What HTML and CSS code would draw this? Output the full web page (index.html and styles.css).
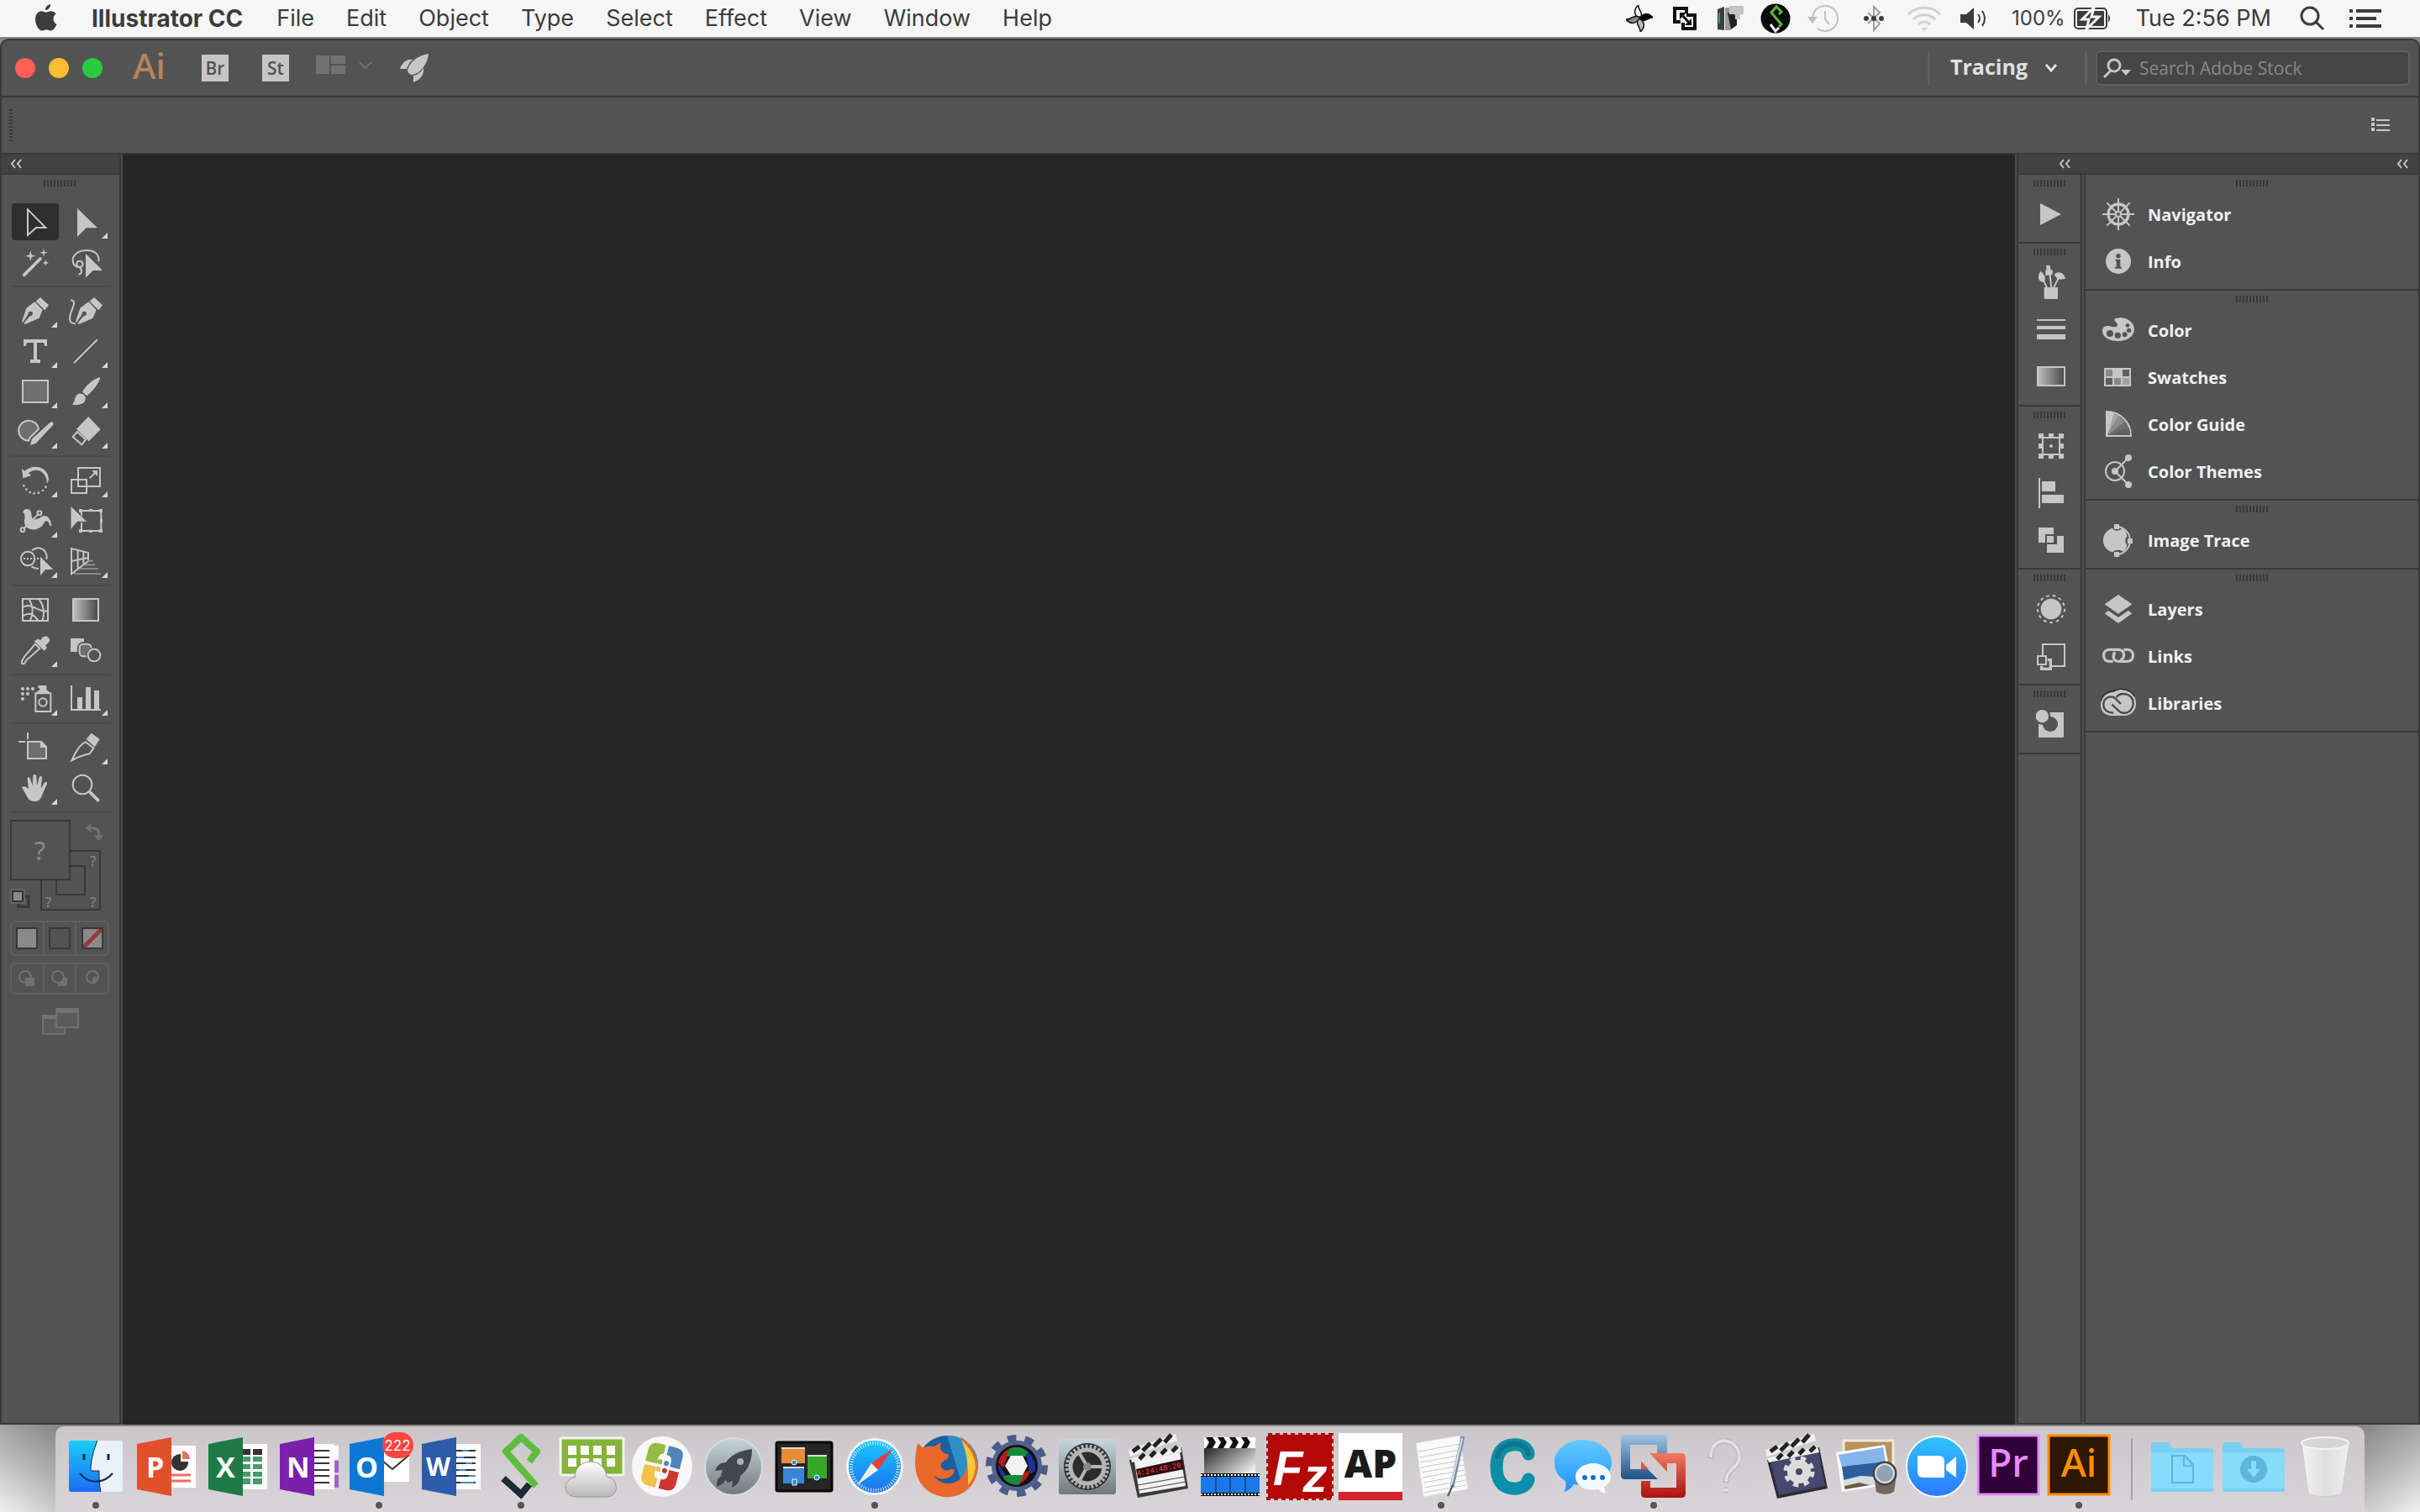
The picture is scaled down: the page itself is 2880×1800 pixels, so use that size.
FILE: index.html
```html
<!DOCTYPE html>
<html lang="en">

<head>
  <meta charset="UTF-8" />
  <meta name="viewport" content="width=device-width, initial-scale=1" />
  <title>Illustrator CC</title>
  <link rel="stylesheet" href="styles.css">
</head>

<body>

  <!-- Menu bar -->
  <header class="menubar">
    <nav class="menus" aria-label="Main menu">
      <button class="apple" aria-label="Apple">
        <svg width="26" height="34" viewBox="0 0 26 34"><path d="M18 0c.3 4-2.800 7.200-6 7C11.600 3.500 15 .300 18 0zM21.500 17.500c0-3.500 2-5 3.200-6C23 9 20.500 8.200 18.500 8.200c-2.500 0-4 1.400-5.500 1.400S9.500 8.200 7.500 8.200C3.500 8.200 0 12 0 18c0 7 4.500 13.500 8 13.500 2 0 3-1.300 5.200-1.300 2.300 0 3 1.300 5.300 1.300 3.300 0 6-5 7-7.700-2.500-1-4-3.500-4-6.300z" fill="#3c3c3c"/></svg>
      </button>
      <button class="app-name">Illustrator CC</button>
      <button>File</button>
      <button>Edit</button>
      <button>Object</button>
      <button>Type</button>
      <button>Select</button>
      <button>Effect</button>
      <button>View</button>
      <button>Window</button>
      <button>Help</button>
    </nav>

    <div class="status">
      <button class="narrow" aria-label="Fan control">
        <svg width="32" height="32" viewBox="0 0 32 32" stroke="#111" stroke-width="1.500"><path d="M16 16C9 12 9 5 15 0c-1 6 6 8 3 16z" fill="#f2f2f2"/><path d="M16 16c4-7 11-7 16-1-6-1-8 6-16 3z" fill="#000"/><path d="M16 16c7 4 7 11 1 16 1-6-6-8-3-16z" fill="#bbb"/><path d="M16 16c-4 7-11 7-16 1 6 1 8-6 16-3z" fill="#888"/></svg>
      </button>
      <button class="narrow" aria-label="VMware">
        <svg width="30" height="30" viewBox="0 0 30 30" fill="none" stroke="#111" stroke-width="4"><path d="M10 19H3V3h14v6"/><path d="M17 11h10v16H13v-7"/><path d="M11 10l10 11" stroke-width="3"/><path d="M9 8h8l-8 8zM23 23h-8l8-8z" fill="#111" stroke="none"/></svg>
      </button>
      <button class="narrow" aria-label="Server">
        <svg width="34" height="32" viewBox="0 0 34 32"><path d="M2 5l8-3v28l-8-1z" fill="#3b3f3e"/><path d="M11 3h7v27h-7z" fill="#999"/><path d="M14 9l11 3v12l-7 5z" fill="#222"/><path d="M16 1h17v10h-4v6h-6v-6h-7z" fill="#c4c4c4"/><path d="M4 9v13" stroke="#3c9a58" stroke-width="2"/></svg>
      </button>
      <button class="narrow" aria-label="Sync">
        <svg width="36" height="36" viewBox="0 0 36 36"><circle cx="18" cy="18" r="17.500" fill="#0a0a0a"/><path d="M22 13l3-3-6-6-6 7 12 14-3 3" fill="none" stroke="#5cb531" stroke-width="3"/><path d="M12 25l6 8 4-4" fill="none" stroke="#eee" stroke-width="3"/></svg>
      </button>
      <button aria-label="Time Machine">
        <svg width="38" height="34" viewBox="0 0 38 34" fill="none" stroke="#c2c2c2" stroke-width="2"><path d="M6 17a15 15 0 1 1 6 12"/><path d="M21 8v10l5 6"/><path d="M0 15h12l-6 8z" fill="#b9b9b9" stroke="none"/></svg>
      </button>
      <button aria-label="Bluetooth">
        <svg width="24" height="32" viewBox="0 0 24 32" fill="none" stroke="#9c9c9c" stroke-width="2"><path d="M5 9l14 13-7 8V2l7 7L5 22"/><g fill="#3c3c3c" stroke="none"><circle cx="3" cy="16" r="3"/><circle cx="12" cy="16" r="3"/><circle cx="21" cy="16" r="3"/></g></svg>
      </button>
      <button aria-label="Wi-Fi">
        <svg width="42" height="32" viewBox="0 0 42 32" fill="none" stroke="#d0d0d0" stroke-width="3"><path d="M2 11C12 .500 30 .500 40 11M8 17c7-7 19-7 26 0M14 23c4-4 10-4 14 0"/><path d="M17 27h8l-4 4z" fill="#d0d0d0" stroke="none"/></svg>
      </button>
      <button aria-label="Volume">
        <svg width="36" height="28" viewBox="0 0 36 28" fill="none" stroke="#3c3c3c" stroke-width="2"><path d="M1 9h7l9-8v26l-9-8H1z" fill="#3c3c3c" stroke="none"/><path d="M22 9q4 5 0 10M27 5q6 9 0 18"/></svg>
      </button>
      <button class="battery">
        <span>100%</span>
        <svg width="44" height="30" viewBox="0 0 44 30"><rect x="1" y="3" width="38" height="24" rx="4" fill="none" stroke="#3c3c3c" stroke-width="2"/><rect x="4" y="6" width="32" height="18" rx="1" fill="#3c3c3c"/><path d="M41 10q4 5 0 10z" fill="#3c3c3c"/><path d="M24 2L10 16h8l-3 12 15-15h-9z" fill="#3c3c3c" stroke="#f6f6f6" stroke-width="3"/></svg>
      </button>
      <button class="clock">Tue 2:56 PM</button>
      <button class="spotlight" aria-label="Spotlight">
        <svg width="30" height="30" viewBox="0 0 30 30" fill="none" stroke="#3c3c3c" stroke-width="3"><circle cx="12" cy="12" r="10"/><path d="M19 19l9 9"/></svg>
      </button>
      <button aria-label="Notification Center">
        <svg width="38" height="22" viewBox="0 0 38 22" fill="#3c3c3c"><path d="M0 0h4v4H0zM8 0h30v4H8zM0 9h4v4H0zM8 9h24v4H8zM0 18h4v4H0zM8 18h30v4H8z"/></svg>
      </button>
    </div>
  </header>

  <main class="window">
    <div class="titlebar">
      <div class="lights">
        <button class="light close" aria-label="Close"></button>
        <button class="light minimize" aria-label="Minimize"></button>
        <button class="light zoom" aria-label="Zoom"></button>
      </div>
      <span class="ai-logo">Ai</span>
      <button class="chip">Br</button>
      <button class="chip">St</button>
      <button class="arrange" aria-label="Arrange documents">
        <svg width="68" height="24" viewBox="0 0 68 24"><path d="M0 1h16v22H0zM18 1h17v10H18zM18 13h17v10H18z" fill="#717171"/><path d="M52 9l7 7 7-7" fill="none" stroke="#717171" stroke-width="2"/></svg>
      </button>
      <button aria-label="GPU performance">
        <svg width="34" height="34" viewBox="0 0 34 34" fill="#c6c6c6"><path d="M34 0C22 2 10 10 9 21c1 2 3 4 5 4C25 24 33 11 34 0zM0 18C3 10 8 6 15 7c-4 4-6 7-7 11zM16 34c8-3 13-9 12-17-3 5-7 8-12 9z"/></svg>
      </button>
      <button class="workspace-switch">
        <span>Tracing</span>
        <svg width="16" height="12" viewBox="0 0 16 12"><path d="M2 2l6 7 6-7" fill="none" stroke="#e0e0e0" stroke-width="3"/></svg>
      </button>
      <div class="search">
        <svg width="36" height="24" viewBox="0 0 36 24" fill="none" stroke="#c6c6c6" stroke-width="3"><circle cx="14" cy="9" r="7"/><path d="M10 15l-8 8"/><path d="M22 14h12l-6 7z" fill="#c6c6c6" stroke="none"/></svg>
        <input type="text" aria-label="Search Adobe Stock" placeholder="Search Adobe Stock" />
      </div>
    </div>

    <div class="controlbar">
      <span class="grip vertical"></span>
      <button aria-label="Panel menu">
        <svg width="22" height="16" viewBox="0 0 22 16" fill="#c6c6c6"><path d="M0 0h4v4H0zM0 6h4v4H0zM0 12h4v4H0zM6 2h16v2H6zM6 8h16v2H6zM6 14h16v2H6z"/></svg>
      </button>
    </div>

    <div class="workspace">
      <!-- Tools -->
      <aside class="toolbar">
        <div class="dock-head">
          <button class="collapse" aria-label="Collapse tools"><svg width="14" height="12" viewBox="0 0 14 12"><path d="M6 1L2 6l4 5M13 1L9 6l4 5"/></svg></button>
        </div>
        <span class="grip"></span>
        <div class="tools">
          <button class="active" aria-label="Selection"><svg viewBox="42 186 168 132"><path class="line" d="M99 208v92l30-27h34z"/></svg></button>
          <button class="fly" aria-label="Direct Selection"><svg viewBox="222 186 168 132"><path d="M276 204v102l32-32h40z"/></svg></button>
          <button aria-label="Magic Wand"><svg viewBox="42 330 168 132"><path class="line wide" d="M86 442l58-58"/><path d="M109 355l4 15 15 4-15 4-4 15-4-15-15-4 15-4zM156 347l3 12 12 3-12 3-3 12-3-12-12-3 12-3zM163 388l3 8 8 3-8 3-3 8-3-8-8-3 8-3z"/></svg></button>
          <button aria-label="Lasso"><svg viewBox="222 330 168 132"><path class="line" d="M352 394c4-22-12-40-42-40-28 0-50 14-50 36 0 20 18 28 30 22 10-6 6-20-6-20-10 0-14 14-6 20 14 4 20 26 2 28"/><path d="M306 366v86l26-26h34z"/></svg></button>
          <hr>
          <button class="fly" aria-label="Pen"><svg viewBox="42 504 168 132"><path d="M78 608l16-48 30-22 28 28-12 30-50 22-5-4 22-26a8 8 0 1 0-6-6l-20 30zM128 536l16-14 30 28-14 18z"/></svg></button>
          <button aria-label="Curvature"><svg viewBox="222 504 168 132"><path d="M270 608l16-48 30-22 28 28-12 30-50 22-5-4 22-26a8 8 0 1 0-6-6l-20 30zM320 536l16-14 30 28-14 18z"/><path class="line" d="M252 531c34 6-16 50 0 78 4 6 10 6 18 7"/></svg></button>
          <button class="fly" aria-label="Type"><svg viewBox="42 648 168 132"><path d="M84 672h84v24h-8l-4-12h-24v60h12v12h-36v-12h12v-60H96l-4 12h-8z"/></svg></button>
          <button class="fly" aria-label="Line Segment"><svg viewBox="222 648 168 132"><path class="line" d="M264 756l84-84"/></svg></button>
          <button class="fly" aria-label="Rectangle"><svg viewBox="42 792 168 132"><path class="line tinted" d="M81 819h90v78H81z"/></svg></button>
          <button class="fly" aria-label="Paintbrush"><svg viewBox="222 792 168 132"><path d="M256 904c14-6 8-34 26-38 18-2 30 14 20 28-8 12-30 14-46 10zM294 860c12-22 36-44 60-52 4 0 4 4 2 8-8 18-24 40-46 58z"/></svg></button>
          <button class="fly" aria-label="Shaper"><svg viewBox="42 936 168 132"><path class="line tinted" d="M102 1034a36 36 0 1 1 36-42l-32 32z"/><path d="M106 1052l6-24 66-60 6-3c8 2 10 10 6 14l-62 66z" stroke="#535353" stroke-width="3"/></svg></button>
          <button class="fly" aria-label="Eraser"><svg viewBox="222 936 168 132"><path d="M316 948l43 46-42 42-44-44z"/><path class="line" d="M276 1002l30 28-14 18-32-28z"/></svg></button>
          <hr>
          <button class="fly" aria-label="Rotate"><svg viewBox="42 30 168 132"><path d="M78 54l10 8c34-28 84-14 86 30l-6 16c0-44-38-62-66-38l10 8-30 10z"/><g><circle cx="85" cy="115" r="4"/><circle cx="94" cy="128" r="4"/><circle cx="107" cy="138" r="4"/><circle cx="122" cy="142" r="4"/><circle cx="138" cy="140" r="4"/><circle cx="153" cy="132" r="4"/><circle cx="163" cy="119" r="4"/></g></svg></button>
          <button class="fly" aria-label="Scale"><svg viewBox="222 30 168 132"><path class="line" d="M279 51h78v66h-78zM255 93h54v48h-54zM320 88l22-22"/><path d="M328 60h20v22z"/></svg></button>
          <button class="fly" aria-label="Width"><svg viewBox="42 174 168 132"><path d="M82 214c-2-20 28-22 30 0 0 8 2 18 8 22l22-6c10-14 38-14 42 28h-6c-4-20-16-22-22-8-10 22-40 26-56 16-14-8-14-24-12-34 2-14-2-26-6-18z"/><path class="line" d="M86 267l49-49"/><circle cx="108" cy="246" r="11" class="line"/><circle cx="81" cy="272" r="7" class="line knob"/><circle cx="141" cy="212" r="7" class="line knob"/></svg></button>
          <button aria-label="Free Transform"><svg viewBox="222 174 168 132"><path class="line" d="M291 204h70v72h-70zM291 204v12M291 250v26"/><path d="M282 198h12v12h-12zM318 198h12v10h-12zM354 198h12v12h-12zM358 234h8v12h-8zM354 270h12v12h-12zM318 272h12v10h-12zM282 270h12v12h-12z"/><path d="M252 186v86l24-28h36z" stroke="#535353" stroke-width="3"/></svg></button>
          <button class="fly" aria-label="Shape Builder"><svg viewBox="42 318 168 132"><g class="line"><path d="M116 356a25 25 0 1 0 0 38c10-10 10-28 0-38z"/><path d="M114 346c24-20 58-4 52 32M112 403c8 6 16 8 26 8"/><path d="M84 375h60" stroke-dasharray="6 6"/></g><path d="M144 368v68l18-22h28z"/></svg></button>
          <button class="fly" aria-label="Perspective Grid"><svg viewBox="222 318 168 132"><path class="line" d="M255 339v91l60-46v-30zM255 384l60-12M278 346v66M298 350v46"/><path stroke="#999" stroke-width="5" d="M312 383h20M300 397h40M284 411h66M264 429h96"/></svg></button>
          <hr>
          <button aria-label="Mesh"><svg viewBox="42 492 168 132"><path class="line" d="M81 519h90v78H81zM104 520c14 24 16 50 4 76M140 520c18 26 20 50 12 76M82 548c36-18 46 20 88 14M82 580c20-14 36-10 54 16" /></svg></button>
          <button aria-label="Gradient"><svg viewBox="222 492 168 132"><path class="line faded" d="M261 519h90v78h-90z"/></svg></button>
          <button class="fly" aria-label="Eyedropper"><svg viewBox="42 636 168 132"><path class="line" d="M126 680l16 16-46 40-10 14c-8 4-12-6-6-12l8-14z"/><path d="M122 670l12-8 12 4c6-16 20-16 28-8 6 10 2 18-12 26l6 10-10 10z"/></svg></button>
          <button aria-label="Blend"><svg viewBox="222 636 168 132"><path d="M252 660h48v48h-48z"/><rect x="282" y="678" width="44" height="48" rx="16" fill="#8a8a8a" stroke="#535353" stroke-width="12"/><rect x="284" y="680" width="42" height="44" rx="14" class="line tinted"/><circle cx="336" cy="720" r="28" fill="#535353"/><circle cx="336" cy="720" r="22" class="line"/></svg></button>
          <hr>
          <button class="fly" aria-label="Symbol Sprayer"><svg viewBox="42 810 168 132"><path class="line" d="M127 856h54v65h-54z"/><path d="M140 828h26v16l16 12h-56l16-12v-6h-6v-8z"/><circle cx="153" cy="888" r="14" class="line"/><circle cx="81" cy="840" r="6"/><circle cx="99" cy="840" r="6"/><circle cx="117" cy="840" r="6"/><circle cx="81" cy="858" r="6"/><circle cx="99" cy="858" r="6"/><circle cx="81" cy="876" r="6"/></svg></button>
          <button class="fly" aria-label="Column Graph"><svg viewBox="222 810 168 132"><path class="line" d="M255 828v87h105"/><path d="M276 870h18v46h-18zM306 834h18v82h-18zM336 846h18v70h-18z"/></svg></button>
          <hr>
          <button aria-label="Artboard"><svg viewBox="42 984 168 132"><path class="line" d="M99 996v24M66 1029h24"/><path class="line tinted" d="M99 1029h48l18 18v42H99z"/><path d="M144 1028v22h22z"/></svg></button>
          <button class="fly" aria-label="Slice"><svg viewBox="222 984 168 132"><path class="line" d="M256 1096c14-32 28-58 50-66l28 22-14 20c-18 4-40 10-64 24z"/><path d="M308 1020l18-22 30 22-18 28z"/></svg></button>
          <button class="fly" aria-label="Hand"><svg viewBox="42 1128 168 132"><path d="M78 1192c6-6 14-4 24 6l-4-36c0-8 8-8 10 0l8 24 2-34c0-8 12-8 12 0l2 34 8-30c4-8 12-4 10 4l-4 36 12-20c4-6 12-4 10 4l-18 40c-4 14-12 22-24 22s-22-2-28-14z"/></svg></button>
          <button aria-label="Zoom"><svg viewBox="222 1128 168 132"><circle cx="294" cy="1182" r="34" class="line"/><path class="line wide" d="M322 1210l28 28"/></svg></button>
          <hr>
        </div>

        <svg class="fill-stroke" viewBox="36 156 360 348" role="img" aria-label="Fill and stroke">
          <g fill="#535353" stroke="#383838" stroke-width="6">
            <path d="M147 279h210v210H147z"/><path d="M201 333h102v102H201z"/><path d="M39 171h210v210H39z"/>
            <path d="M66 442h36v36H66z" stroke-width="10"/>
          </g>
          <path d="M45 423h36v36H45z" fill="none" stroke="#6a6a6a" stroke-width="16"/>
          <path d="M45 423h36v36H45z" fill="#8a8a8a" stroke="#333" stroke-width="6"/>
          <path d="M304 197l22-17v12c22 0 32 8 32 30h12l-18 22-16-22h12c0-14-6-20-22-20v12z" fill="#717171"/>
          <g fill="#8a8a8a">
            <text x="122" y="311" font-size="92">?</text>
            <text x="321" y="333" font-size="50">?</text>
            <text x="162" y="480" font-size="50">?</text>
            <text x="321" y="480" font-size="50">?</text>
          </g>
        </svg>

        <div class="segmented">
          <button aria-label="Color"><i class="swatch solid"></i></button>
          <button aria-label="Gradient fill"><i class="swatch"></i></button>
          <button aria-label="None"><i class="swatch none"></i></button>
        </div>
        <div class="segmented modes">
          <button aria-label="Draw Normal"><svg width="22" height="22" viewBox="0 0 22 22"><circle cx="9" cy="9" r="7"/><path d="M9 10h11v10H9z"/></svg></button>
          <button aria-label="Draw Behind"><svg width="22" height="22" viewBox="0 0 22 22"><path d="M9 10h11v10H9z"/><circle class="front" cx="9" cy="9" r="7"/></svg></button>
          <button aria-label="Draw Inside"><svg width="22" height="22" viewBox="0 0 22 22"><circle cx="11" cy="9" r="7"/><path d="M11 9h7q0 7-7 7z"/></svg></button>
        </div>
        <button class="screen-mode" aria-label="Screen mode"><svg width="44" height="32" viewBox="0 0 44 32"><path d="M1 11h26v20H1z"/><path d="M0 8h28v5H0z" fill="#717171" stroke="none"/><path d="M17 1h26v22H17z"/><path d="M16 0h28v6H16z" fill="#717171" stroke="none"/></svg></button>
      </aside>

      <section class="canvas" aria-label="Canvas"></section>

      <!-- Panels -->
      <aside class="panels">
        <div class="dock-head">
          <button class="collapse" aria-label="Expand icon panels"><svg width="14" height="12" viewBox="0 0 14 12"><path d="M6 1L2 6l4 5M13 1L9 6l4 5"/></svg></button>
          <button class="collapse" aria-label="Expand panels"><svg width="14" height="12" viewBox="0 0 14 12"><path d="M6 1L2 6l4 5M13 1L9 6l4 5"/></svg></button>
        </div>
        <div class="panel-columns">
          <div class="column icons-only">
            <div class="group">
              <span class="grip"></span>
              <button aria-label="Actions"><svg viewBox="66 141 222 168"><path d="M144 186l75 39-75 39z"/></svg></button>
            </div>
            <div class="group">
              <span class="grip"></span>
              <button aria-label="Brushes"><svg viewBox="66 387 222 168"><path d="M158 486h49v38q0 4-4 4h-41q-4 0-4-4z"/><path class="line" d="M154 458l14 30M178 436l6 52M210 452l-18 36"/><path d="M146 428c-14 16-10 36 8 40 12-8 10-24-8-40zM165 408h14l2 14 8 4-2 16-24 2v-18l4-4zM194 442c8-16 36-12 40 14l-26 2z"/></svg></button>
              <button aria-label="Stroke"><svg viewBox="66 555 222 168"><path d="M132 600h102v6H132zM132 624h102v12H132zM132 654h102v18H132z"/></svg></button>
              <button aria-label="Gradient panel"><svg viewBox="66 723 222 168"><path class="line faded" d="M135 771h96v66h-96z"/></svg></button>
            </div>
            <div class="group">
              <span class="grip"></span>
              <button aria-label="Transform"><svg viewBox="66 969 222 168"><path class="line" d="M153 1023h60v60h-60z"/><path d="M138 1008h18v18h-18zM174 1008h18v12h-18zM210 1008h18v18h-18zM138 1044h12v18h-12zM216 1044h12v18h-12zM138 1080h18v18h-18zM174 1086h18v12h-18zM210 1080h18v18h-18z"/><circle cx="183" cy="1053" r="6"/></svg></button>
              <button aria-label="Align"><svg viewBox="66 -3 222 168"><path d="M138 27h6v108h-6zM150 39h48v36h-48zM150 87h78v30h-78z"/></svg></button>
              <button aria-label="Pathfinder"><svg viewBox="66 165 222 168"><path d="M138 204h54v24h-30v30h-24zM204 234h24v60h-60v-30h36zM168 234h24v24h-24z"/></svg></button>
            </div>
            <div class="group">
              <span class="grip"></span>
              <button aria-label="Appearance"><svg viewBox="66 411 222 168"><circle cx="183" cy="495" r="37"/><circle cx="183" cy="495" r="48" class="line" stroke-dasharray="11 12"/></svg></button>
              <button aria-label="Graphic Styles"><svg viewBox="66 579 222 168"><path class="line" d="M153 660v-39h78v78h-45M135 663h30v30h-30z"/><path class="line thick" d="M149 698v11h32v-32h-11"/></svg></button>
            </div>
            <div class="group">
              <span class="grip"></span>
              <button aria-label="Symbols"><svg viewBox="66 825 222 168"><path d="M138 864h90v90h-90z"/><circle cx="180" cy="906" r="27" fill="#535353"/><circle cx="151" cy="878" r="30" fill="#535353"/><circle cx="151" cy="878" r="23"/></svg></button>
            </div>
          </div>

          <div class="column">
            <div class="group">
              <span class="grip"></span>
              <button><svg viewBox="306 141 222 168"><circle cx="423" cy="225" r="36" class="line thick"/><circle cx="423" cy="225" r="9" class="line"/><path class="line" d="M423 168v46M423 236v46M366 225h46M434 225h46M382 184l33 33M431 233l33 33M464 184l-33 33M415 233l-33 33"/></svg>Navigator</button>
              <button><svg viewBox="306 309 222 168"><circle cx="423" cy="393" r="45"/><path fill="#535353" d="M412 386h18v27h5v6h-24v-6h5v-21h-4z"/><circle cx="423" cy="374" r="8" fill="#535353"/></svg>Info</button>
            </div>
            <div class="group">
              <span class="grip"></span>
              <button><svg viewBox="306 555 222 168"><path d="M410 598c34-12 70 8 70 38 0 24-24 42-58 42-32 0-56-14-56-36 0-14 10-20 24-18 14 4 28 8 30-4 0-8-14-12-10-22z"/><g fill="#535353"><circle cx="393" cy="651" r="12"/><circle cx="421" cy="658" r="11"/><circle cx="446" cy="655" r="9"/><circle cx="461" cy="640" r="8"/><circle cx="456" cy="622" r="7"/></g></svg>Color</button>
              <button><svg viewBox="306 723 222 168"><path d="M372 774h96v66h-96z"/><path fill="#8a8a8a" d="M378 780h24v24h-24zM408 810h24v24h-24z"/><path fill="#606060" d="M438 780h24v24h-24zM378 810h24v24h-24z"/><path fill="#a0a0a0" d="M438 810h24v24h-24z"/></svg>Swatches</button>
              <button><svg viewBox="306 891 222 168"><path class="line tinted" d="M381 930c50 0 87 38 87 87h-87z"/><path fill="#a4a4a4" d="M384 1014l8-80 32 10z"/><path fill="#8c8c8c" d="M384 1014l40-70 22 22z"/><path fill="#606060" d="M384 1014l78-26 4 26z"/><path d="M384 1014v-84l24 3z"/></svg>Color Guide</button>
              <button><svg viewBox="306 1059 222 168"><circle cx="411" cy="1143" r="33" class="line"/><circle cx="411" cy="1143" r="12"/><path class="line" d="M411 1143l48-48M411 1143l48 48"/><circle cx="459" cy="1095" r="12"/><circle cx="459" cy="1191" r="12"/></svg>Color Themes</button>
            </div>
            <div class="group">
              <span class="grip"></span>
              <button><svg viewBox="306 165 222 168"><path d="M402 206c4 12 26 12 34 2 14 8 16 16 18 28-8 6-8 22 0 30-2 12-6 18-14 24-10-8-28-8-38 2-44-14-44-72 0-86z"/><path class="line" d="M422 201a50 50 0 0 1 0 99"/><path d="M408 192h18v18h-18zM408 291h18v18h-18zM456 243h18v18h-18z"/></svg>Image Trace</button>
            </div>
            <div class="group">
              <span class="grip"></span>
              <button><svg viewBox="306 411 222 168"><path d="M423 444l49 34-49 34-49-34zM374 511l14-10 35 24 35-24 14 10-49 35z"/></svg>Layers</button>
              <button><svg viewBox="306 579 222 168"><g class="line thick"><path d="M404 682h-14c-26 0-26-42 0-42h32c26 0 26 32 8 38"/><path d="M442 640h14c26 0 26 42 0 42h-32c-22 0-22-24-12-32"/></g></svg>Links</button>
              <button><svg viewBox="306 747 222 168"><path d="M360 838c0-28 22-46 48-46 22-20 78-6 78 40 0 26-16 44-42 44h-44c-24 0-40-14-40-38z"/><path fill="none" stroke="#4a4a4a" stroke-width="7" d="M432 834l-20-20c-14-12-42-4-42 22 0 20 16 30 36 30M400 836l28 26c30 14 48-10 48-30 0-34-42-44-60-22"/><path d="M362 822c4-24 24-32 44-34 22-14 60-6 74 18" fill="none" stroke="#2b2b2b" stroke-width="4"/></svg>Libraries</button>
            </div>
          </div>
        </div>
      </aside>
    </div>
  </main>

  <!-- Dock -->
  <footer class="dock">
    <div class="apps">
      <button class="running" aria-label="Finder"><svg viewBox="0 0 84 102"><rect x="10" y="17" width="64" height="61" rx="3" fill="#e9f1fa"/><path d="M13 17h31c-5 12-8 24-8 36h10c0 9 0 17 2 25H13q-3 0-3-3V20q0-3 3-3z" fill="url(#finder)"/><g fill="none" stroke="#16283c" stroke-width="2"><path d="M44 17c-5 12-8 24-8 36h10c0 9 0 17 2 25" stroke-width="1"/><path d="M28 33v7M57 33v7" stroke-width="3"/><path d="M23 56c10 13 28 13 39 0"/></g></svg></button>
      <button aria-label="PowerPoint"><svg viewBox="0 0 84 102"><path d="M46 23h31v50H46z" fill="#fff"/><path d="M59 33v9h9a10 10 0 1 1-9-9z" fill="#333"/><path d="M61 29a10 10 0 0 1 9 10h-9z" fill="#e8715a"/><path d="M48 58h23M48 65h23" stroke="#e8715a" stroke-width="3"/><path d="M7 21l41-8v70L7 75z" fill="#e1502b"/><text x="18" y="61" class="office">P</text></svg></button>
      <button aria-label="Excel"><svg viewBox="0 0 84 102"><path d="M46 21h31v54H46z" fill="#fff"/><path d="M46 27h11v7H46zM60 27h11v7H60z" fill="#333"/><path d="M46 36h11v6H46zM60 36h11v6H60zM46 45h11v6H46zM60 45h11v6H60zM46 54h11v6H46zM60 54h11v6H60zM46 62h11v7H46zM60 62h11v7H60z" fill="#4a9a6c"/><path d="M7 21l41-8v70L7 75z" fill="#1f7a46"/><text x="16" y="61" class="office">X</text></svg></button>
      <button aria-label="OneNote"><svg viewBox="0 0 84 102"><path d="M46 21h27v54H46zM73 23h5v16h-5z" fill="#fff"/><path d="M73 41h5v14h-5zM73 58h5v15h-5z" fill="#a264c8"/><path d="M48 29h19M48 37h19M48 44h19M48 52h19M48 59h19M48 67h19" stroke="#333" stroke-width="2"/><path d="M8 21l41-8v70L8 75z" fill="#7a20ab"/><text x="16" y="61" class="office">N</text></svg></button>
      <button class="running" aria-label="Outlook, 222 unread"><svg viewBox="0 0 84 102"><path d="M46 21h32v45H46z" fill="#fff"/><path d="M46 41l12 10 20-17" fill="none" stroke="#333" stroke-width="2"/><path d="M7 21l41-8v70L7 75z" fill="#0c78d4"/><text x="14" y="61" class="office">O</text><rect x="46" y="7" width="37" height="31" rx="15" fill="#fc4540"/><text x="64" y="29" text-anchor="middle" class="badge">222</text></svg></button>
      <button aria-label="Word"><svg viewBox="0 0 84 102"><path d="M46 21h32v54H46z" fill="#fff"/><path d="M48 29h24M48 37h24M48 44h24M48 52h24M48 59h24M48 67h24" stroke="#333" stroke-width="2"/><path d="M56 29h8M50 37h8M60 44h8M52 52h8M64 59h8M54 67h16" stroke="#4a86cf" stroke-width="2"/><path d="M8 21l41-8v70L8 75z" fill="#2b5ba9"/><text x="13" y="59" class="office small">W</text></svg></button>
      <button class="running" aria-label="Slickedit"><svg viewBox="0 0 84 102" fill="none" stroke-width="8"><path d="M52 42l9-12-19-17-18 17 36 41" stroke="#5ebd3e" stroke-linejoin="round"/><path d="M21 62l21 19 10-12" stroke="#1c2b36"/></svg></button>
      <button aria-label="Cloud desktop"><svg viewBox="0 0 84 102"><rect x="5" y="14" width="75" height="44" rx="2" fill="#85b43a" stroke="#f2f6ea" stroke-width="3"/><path d="M14 23h10v11H14zM29 23h10v11H29zM44 23h10v11H44zM60 23h10v11H60zM14 38h10v10H14zM29 38h10v10H29zM44 38h10v10H44zM60 38h10v10H60z" fill="#fafafa"/><path d="M24 84c-18 0-16-22-2-23 0-25 36-25 38-1 14 1 16 24 0 24z" fill="url(#silver)" stroke="#999"/></svg></button>
      <button aria-label="Windows share"><svg viewBox="0 0 84 102"><circle cx="42" cy="48" r="36" fill="#f7f7f7"/><g transform="rotate(14 42 48)"><path d="M21 32q0-10 10-10h9v11q-5 0-5 7v6H21z" fill="#95bd41"/><path d="M44 22h9q10 0 10 10v14H51v-6q0-7-7-7z" fill="#4f85b8"/><path d="M21 50h14v6q0 7 5 7v11h-9q-10 0-10-10z" fill="#f2c24c"/><path d="M51 50h12v14q0 10-10 10h-9V63q7 0 7-7z" fill="#ce3530"/><circle cx="38" cy="43" r="3" fill="#95bd41"/><circle cx="46" cy="43" r="3" fill="#4f85b8"/><circle cx="38" cy="52" r="3" fill="#f2c24c"/><circle cx="46" cy="52" r="3" fill="#ce3530"/></g></svg></button>
      <button aria-label="Launchpad"><svg viewBox="0 0 84 102"><circle cx="42" cy="48" r="34" fill="url(#steel)" stroke="#d3dde2" stroke-width="2"/><path d="M64 27c-16 2-26 8-31 16-7 0-11 4-13 10l9-1-2 6 8 9 6-2-1 8c6-3 10-8 10-14 9-6 14-18 14-32zM28 59c-6 2-6 8-6 13 4-2 9-3 10-9z" fill="#42474b"/><circle cx="50" cy="42" r="4" fill="#aab4b9"/></svg></button>
      <button aria-label="Mission Control"><svg viewBox="0 0 84 102"><rect x="9" y="19" width="66" height="58" rx="2" fill="#262626" stroke="#080808" stroke-width="3"/><path d="M15 26h28v18H15z" fill="#e88b35"/><path d="M46 35h23v27H46z" fill="#35a82b"/><path d="M17 49h25v19H17z" fill="#3a84d8"/><path d="M15 26h28M46 35h23M17 49h25" stroke="#ddd" stroke-width="2"/><g fill="#1d90e6" stroke="#fff"><circle cx="30" cy="43" r="3"/><circle cx="57" cy="61" r="3"/><path d="M28 63h5v7h-5z"/></g></svg></button>
      <button class="running" aria-label="Safari"><svg viewBox="0 0 84 102"><circle cx="42" cy="48" r="34" fill="#f4f4f4"/><circle cx="42" cy="48" r="31" fill="url(#ocean)"/><circle cx="42" cy="48" r="28" fill="none" stroke="#d9f1ff" stroke-width="4" stroke-dasharray="1 2"/><path d="M63 27L38 44l8 8z" fill="#ee3b35"/><path d="M21 70l17-26 8 8z" fill="#f0f0f0"/></svg></button>
      <button aria-label="Firefox"><svg viewBox="0 0 84 102"><circle cx="43" cy="46" r="35" fill="#1c5f9e"/><path d="M43 11a35 35 0 0 1 20 65z" fill="#2d8fc6"/><path d="M8 20l7 6c4-3 9-3 13-2l8-5c-2 5-1 8 1 11 4 4 9 2 8 5 0 4-7 6-9 9-2 6 6 11 12 7 3-1 6 3 1 7-6 6-16 6-22 0 8 14 30 14 38-4 6-14 0-34-6-42C78 26 84 46 76 64 62 92 22 90 9 63 3 50 5 34 8 20z" fill="#e9682a"/><path d="M60 16c16 14 24 36 8 54 0-20 0-36-8-54z" fill="#fbc73a"/></svg></button>
      <button aria-label="Aperture tool"><svg viewBox="0 0 84 102"><circle cx="42" cy="47" r="32" fill="none" stroke="#4b5a8a" stroke-width="10" stroke-dasharray="10 10"/><circle cx="42" cy="47" r="30" fill="#50608f"/><circle cx="42" cy="47" r="25" fill="#111"/><path d="M34 26l-8 24-6-7q3-12 14-17z" fill="#b41c20"/><path d="M34 26q12-4 21 4l4 6H30z" fill="#168a3b"/><path d="M56 31q10 10 8 22l-6 4-5-24z" fill="#1c2fa0"/><path d="M58 52q-2 12-15 18l6-14z" fill="#b41c20"/><path d="M24 58h26l-6 12q-14 0-20-12z" fill="#168a3b"/><path d="M20 45l10 14h-6q-5-7-4-14z" fill="#1c2fa0"/><path d="M35 35h14l6 12-6 11H35l-7-11z" fill="#f2f2f2"/></svg></button>
      <button aria-label="System Preferences"><svg viewBox="0 0 84 102"><rect x="8" y="15" width="68" height="66" rx="3" fill="url(#steel)"/><circle cx="42" cy="48" r="28" fill="#2c2c2c"/><circle cx="42" cy="48" r="24" fill="none" stroke="#aaa" stroke-width="5" stroke-dasharray="3 2"/><circle cx="42" cy="48" r="20" fill="none" stroke="#b5b5b5" stroke-width="5"/><path d="M42 48h20M42 48L32 31M42 48L32 66" stroke="#b5b5b5" stroke-width="4"/><circle cx="42" cy="48" r="5" fill="#888"/></svg></button>
      <button aria-label="Clapper"><svg viewBox="0 0 84 102"><path d="M8 40l62-15 8 49-60 11z" fill="#3a3a3a"/><path d="M14 42l54-11 7 40-55 9z" fill="#f2f2f2"/><path d="M7 28l56-19 2 8L9 36z" fill="#eee"/><path d="M10 38l59-14 1 7-59 12z" fill="#eee"/><path d="M12 30l8-6M24 29l9-9M37 24l9-9M50 19l8-9M20 39l6-6M33 36l6-6M46 33l6-6M59 30l6-6" stroke="#222" stroke-width="5"/><path d="M16 51l55-12 2 12-55 11z" fill="#2a0c10"/><path d="M18 70l56-10M19 76l56-10" stroke="#444"/><text x="17" y="59" transform="rotate(-11 17 59)" class="timecode">4:24:48:20</text></svg></button>
      <button aria-label="Movie splitter"><svg viewBox="0 0 84 102"><path d="M12 13h61v44H12z" fill="url(#ink)"/><path d="M12 13h61v13H12z" fill="#fff"/><path d="M14 13h8l4 6-4 7h-8l4-7zM28 13h7l4 6-4 7h-7l4-7zM42 13h7l4 6-4 7h-7l4-7zM56 13h7l4 6-4 7h-7l4-7z" fill="#111"/><path d="M8 57h70v26H8z" fill="#1c78e8"/><path d="M8 58h70M8 81h70" stroke="#111" stroke-width="4"/><path d="M8 58h70M8 81h70" stroke="#fff" stroke-width="2" stroke-dasharray="2 2"/><path d="M26 60v19M43 60v19M61 60v19" stroke="#124"/></svg></button>
      <button aria-label="FileZilla"><svg viewBox="0 0 84 102"><rect x="4" y="10" width="76" height="76" fill="#b20808" stroke="#b20808" stroke-width="4" stroke-dasharray="5 4"/><text x="10" y="70" class="fz">F<tspan dy="8">z</tspan></text></svg></button>
      <button aria-label="AP"><svg viewBox="0 0 84 102"><path d="M4 8h76v80H4z" fill="#fff"/><path d="M4 78h76v10H4z" fill="#d2232f"/><text x="42" y="61" text-anchor="middle" class="ap">AP</text></svg></button>
      <button class="running" aria-label="TextEdit"><svg viewBox="0 0 84 102"><path d="M12 20l52-9 10 64-53 9z" fill="#fafafa" stroke="#ddd"/><path d="M15 30l50-9M16 37l50-9M17 43l50-9M18 49l50-9M19 55l50-9M20 61l50-9M21 67l50-9M22 73l50-9M22 79l50-9" stroke="#c8c8d0"/><path d="M68 12L55 72" stroke="#7e96a8" stroke-width="5"/><path d="M67 14L54 70" stroke="#d2e0ea" stroke-width="2"/><path d="M56 70l-6 13" stroke="#555" stroke-width="2"/></svg></button>
      <button aria-label="Camtasia"><svg viewBox="0 0 84 102"><path d="M61 33c-2-10-12-12-19-11-14 1-19 12-19 26s5 25 19 26c7 1 17-2 19-11" fill="none" stroke="#0b8fa8" stroke-width="15" stroke-linecap="round"/><path d="M61 33c-2-10-12-13-19-12-11 1-16 7-18 15" fill="none" stroke="#13758b" stroke-width="6" stroke-linecap="round"/></svg></button>
      <button aria-label="Messages"><svg viewBox="0 0 84 102"><path d="M42 16c19 0 34 12 34 27S61 70 42 70q-6 0-11-1-4 7-12 9 4-6 2-13C12 60 8 52 8 43c0-15 15-27 34-27z" fill="url(#bubble)"/><path d="M54 44c11 0 21 7 21 16q0 8-8 12l2 8q-6-1-9-5c-16 3-27-5-27-15 0-9 10-16 21-16z" fill="#f3f9ff"/><g fill="#1a6fc2"><circle cx="44" cy="61" r="3"/><circle cx="54" cy="61" r="3"/><circle cx="65" cy="61" r="3"/></g></svg></button>
      <button class="running" aria-label="VMware Fusion"><svg viewBox="0 0 84 102"><path d="M8 10h45q5 0 5 5v17H46V22H14v29h13v-8l20 20H8q-5 0-5-5V15q0-5 5-5z" fill="url(#vmblue)"/><path d="M37 32h38q5 0 5 5v43q0 5-5 5H32q-5 0-5-5V65h11v8h31V44H58v10zM27 41v10h9z" fill="url(#vmred)"/></svg></button>
      <button aria-label="Missing application"><svg viewBox="0 0 84 102" fill="none"><g stroke="#b5b2b5" stroke-width="6"><path d="M25 38c0-30 34-24 34-2 0 14-16 14-16 31"/><path d="M40 76h6"/></g><g stroke="#e1dfe1" stroke-width="4"><path d="M25 37c0-29 34-23 34-1 0 14-16 14-16 30"/><path d="M40 76h6"/></g></svg></button>
      <button aria-label="Movie tools"><svg viewBox="0 0 84 102"><path d="M8 40l62-15 10 49-60 12z" fill="#2c2c33"/><path d="M12 42l57-12 8 41-55 11z" fill="#47476f"/><path d="M6 28l58-19 2 8L8 36z" fill="#eee"/><path d="M8 38l60-14 2 7-60 12z" fill="#eee"/><path d="M12 30l8-6M24 29l9-9M37 24l9-9M50 19l8-9M20 39l6-6M33 36l6-6M46 33l6-6M59 30l6-6" stroke="#222" stroke-width="5"/><circle cx="46" cy="54" r="15" fill="none" stroke="#dcdcdc" stroke-width="7" stroke-dasharray="6 6"/><circle cx="46" cy="54" r="9" fill="none" stroke="#dcdcdc" stroke-width="10"/></svg></button>
      <button aria-label="Preview"><svg viewBox="0 0 84 102"><path d="M15 17h59v42H15z" fill="#b8935c" stroke="#efe9dc" stroke-width="3"/><path d="M6 31l58-9 9 47-60 9z" fill="#fafafa"/><path d="M9 34l53-9 3 18-52 6z" fill="#86b5ec"/><path d="M13 48l52-6 4 18-53 9z" fill="#2b5f9c"/><path d="M15 64l20-5 34 2 1 6-54 8z" fill="#d8dde0"/><path d="M16 71l18-4 12 3-29 5z" fill="#6b5b45"/><path d="M51 58h27l-3 20q-11 6-21 0z" fill="#75685a"/><circle cx="64" cy="56" r="13" fill="#8fa3b5" stroke="#444" stroke-width="3"/><circle cx="64" cy="56" r="11" fill="none" stroke="#ddd" stroke-width="2"/></svg></button>
      <button aria-label="Zoom meetings"><svg viewBox="0 0 84 102"><circle cx="42" cy="48" r="36" fill="url(#meet)" stroke="#f5f5f5" stroke-width="2"/><path d="M19 35h25q7 0 7 7v19H26q-7 0-7-7zM53 46l12-10v25l-12-9z" fill="#fff"/></svg></button>
      <button aria-label="Premiere Pro"><svg viewBox="0 0 84 102"><rect x="6" y="11" width="72" height="70" fill="#2f0039" stroke="#e58cff" stroke-width="3"/><text x="42" y="60" text-anchor="middle" class="adobe" fill="#e58cff">Pr</text></svg></button>
      <button class="running" aria-label="Illustrator"><svg viewBox="0 0 84 102"><rect x="6" y="11" width="72" height="70" fill="#2e1700" stroke="#ff8d00" stroke-width="3"/><text x="42" y="60" text-anchor="middle" class="adobe" fill="#ff8d00">Ai</text></svg></button>
    </div>
    <span class="divider"></span>
    <div class="places">
      <button aria-label="Documents"><svg viewBox="0 0 84 102"><path d="M5 22q0-3 3-3h16q3 0 4 3l2 4h47q2 0 2 3v47q0 2-2 2H7q-2 0-2-2z" fill="#7ad0f2"/><path d="M5 31h74v43H5z" fill="#87dbfb"/><path d="M30 35h15l10 11v21H30zM44 35v12h11" fill="none" stroke="#5bb5dc" stroke-width="2"/></svg></button>
      <button aria-label="Downloads"><svg viewBox="0 0 84 102"><path d="M5 22q0-3 3-3h16q3 0 4 3l2 4h47q2 0 2 3v47q0 2-2 2H7q-2 0-2-2z" fill="#7ad0f2"/><path d="M5 31h74v43H5z" fill="#87dbfb"/><circle cx="42" cy="51" r="16" fill="#5bb5dc"/><path d="M39 41h6v10h5l-8 10-8-10h5z" fill="#87dbfb"/></svg></button>
      <button aria-label="Trash"><svg viewBox="0 0 84 102"><path d="M14 20l8 60q20 8 40 0l9-60z" fill="url(#glass)" stroke="#c9c9cc"/><ellipse cx="42" cy="20" rx="28" ry="7" fill="#d6d6d8" stroke="#f4f4f4" stroke-width="2"/></svg></button>
    </div>
  </footer>

  <!-- Shared gradients -->
  <svg class="defs" width="0" height="0" aria-hidden="true">
    <defs>
      <linearGradient id="fade"><stop offset="0" stop-color="#c0c0c0"/><stop offset="1" stop-color="#484848"/></linearGradient>
      <linearGradient id="finder" x2="0" y2="1"><stop offset="0" stop-color="#19cefa"/><stop offset="1" stop-color="#1b6df5"/></linearGradient>
      <linearGradient id="silver" x2="0" y2="1"><stop offset="0" stop-color="#fff"/><stop offset="1" stop-color="#b8b8b8"/></linearGradient>
      <linearGradient id="steel" x2="0" y2="1"><stop offset="0" stop-color="#c6d6dc"/><stop offset="1" stop-color="#75787b"/></linearGradient>
      <linearGradient id="ocean" x2="0" y2="1"><stop offset="0" stop-color="#1bc8fb"/><stop offset="1" stop-color="#1d70ee"/></linearGradient>
      <linearGradient id="bubble" x2="0" y2="1"><stop offset="0" stop-color="#63cbff"/><stop offset="1" stop-color="#1f93fb"/></linearGradient>
      <linearGradient id="meet" x2="0" y2="1"><stop offset="0" stop-color="#2fc5ff"/><stop offset="1" stop-color="#2c78ff"/></linearGradient>
      <linearGradient id="vmblue" x2="0" y2="1"><stop offset="0" stop-color="#9cc4e6"/><stop offset="1" stop-color="#1f5283"/></linearGradient>
      <linearGradient id="vmred" x2="0" y2="1"><stop offset="0" stop-color="#f47a62"/><stop offset="1" stop-color="#a8120f"/></linearGradient>
      <linearGradient id="ink" y2="1"><stop offset="0" stop-color="#000"/><stop offset="1" stop-color="#fff"/></linearGradient>
      <linearGradient id="glass"><stop offset="0" stop-color="#f4f4f5"/><stop offset=".5" stop-color="#dededf"/><stop offset="1" stop-color="#f0f0f1"/></linearGradient>
    </defs>
  </svg>

</body>

</html>
```
FILE: styles.css
```css
* {
  margin: 0;
  padding: 0;
  box-sizing: border-box;
}

body {
  display: flex;
  flex-direction: column;
  min-height: 100vh;
  font-family: "Open Sans", "Noto Sans", sans-serif;
  background-color: #858585;
  background-image:
    linear-gradient(215deg, #808080, #b4b4b4 50%, #f0f0f0),
    linear-gradient(145deg, #808080, #b4b4b4 50%, #f0f0f0);
  background-position: left bottom, right bottom;
  background-size: 80px 104px;
  background-repeat: no-repeat;
  color: #f0f0f0;
  overflow: hidden;
}

button {
  border: none;
  background: none;
  color: inherit;
  font: inherit;
  cursor: default;
}

svg {
  display: block;
  flex: none;
}

.defs {
  position: absolute;
}

/* Menu bar */
.menubar {
  display: flex;
  justify-content: space-between;
  height: 46px;
  padding: 0 46px 0 42px;
  background: #f6f6f6;
  border-bottom: 2px solid #858585;
  color: #3c3c3c;
  font-family: Inter, "Liberation Sans", sans-serif;
  font-size: 27px;
  line-height: 44px;
}

.menus,
.status {
  display: flex;
  align-items: center;
}

.menus {
  gap: 38px;
}

.apple {
  margin-right: 3px;
}

.app-name {
  margin-right: 2px;
  font-size: 28px;
  font-weight: 700;
}

.status button {
  display: flex;
  justify-content: center;
  align-items: center;
  min-width: 60px;
}

.status .narrow {
  min-width: 54px;
}

.status .battery {
  gap: 10px;
  margin-left: 14px;
  font-size: 24px;
}

.status .clock {
  margin: 0 19px 0 30px;
}

.status button:last-child {
  min-width: 38px;
  margin-left: 14px;
}

/* Application window */
.window {
  display: flex;
  flex-direction: column;
  flex: 1;
  border: 2px solid #383838;
  border-bottom: none;
  border-radius: 10px 10px 0 0;
  background: #535353;
  overflow: hidden;
}

.titlebar,
.controlbar {
  display: flex;
  align-items: center;
  height: 68px;
  border-bottom: 2px solid #383838;
}

.titlebar {
  padding: 0 10px 0 16px;
}

.lights {
  display: flex;
  gap: 16px;
}

.light {
  width: 24px;
  height: 24px;
  border-radius: 50%;
}

.close {
  background: #ff5f57;
}

.minimize {
  background: #ffbe2f;
}

.zoom {
  background: #28ca42;
}

.ai-logo {
  width: 82px;
  margin-left: 36px;
  padding-bottom: 6px;
  color: #b9835c;
  font-family: "Noto Sans", sans-serif;
  font-size: 42px;
  font-weight: 500;
  line-height: 60px;
}

.chip {
  width: 32px;
  height: 32px;
  margin-right: 40px;
  background: #c6c6c6;
  color: #535353;
  font-size: 21px;
  font-weight: 600;
  line-height: 32px;
}

.chip + .arrange {
  margin: 0 32px 8px -8px;
}

.workspace-switch {
  display: flex;
  align-items: center;
  gap: 20px;
  height: 40px;
  margin-left: auto;
  padding: 0 32px 0 24px;
  border: solid #606060;
  border-width: 0 3px;
  color: #e0e0e0;
  font-size: 25px;
  font-weight: 700;
}

.workspace-switch span {
  padding-bottom: 4px;
}

.search {
  display: flex;
  align-items: center;
  gap: 8px;
  width: 374px;
  height: 42px;
  margin-left: 10px;
  padding: 0 6px;
  background: #454545;
  border: 2px solid #606060;
  border-radius: 6px;
}

.search input {
  flex: 1;
  min-width: 0;
  border: none;
  outline: none;
  background: none;
  color: #e0e0e0;
  font: 21px "Open Sans", sans-serif;
}

.search input::placeholder {
  color: #8a8a8a;
}

.controlbar {
  justify-content: space-between;
  padding: 0 34px 0 9px;
}

.controlbar button {
  padding-bottom: 2px;
}

.grip {
  display: block;
  width: 38px;
  height: 8px;
  margin: 6px auto 5px;
  background: repeating-linear-gradient(90deg, #383838 0 2px, transparent 2px 4px);
}

.grip.vertical {
  width: 4px;
  height: 38px;
  margin: 0;
  background: repeating-linear-gradient(#383838 0 2px, transparent 2px 4px);
}

.workspace {
  display: flex;
  flex: 1;
}

.dock-head {
  display: flex;
  align-items: center;
  height: 24px;
  background: #424242;
  border-bottom: 2px solid #383838;
}

.collapse svg {
  fill: none;
  stroke: #c6c6c6;
  stroke-width: 2;
}

.canvas {
  flex: 1;
  border-left: 2px solid #4b4b4b;
  background: #262626;
}

/* Icon strokes */
.line {
  fill: none;
  stroke: #c6c6c6;
  stroke-width: 6;
}

.wide {
  stroke-width: 11;
  stroke-linecap: round;
}

.thick {
  stroke-width: 10;
}

.tinted {
  fill: #6e6e6e;
}

.faded {
  fill: url(#fade);
}

.knob {
  fill: #535353;
}

/* Tools */
.toolbar {
  width: 142px;
  border: solid #383838;
  border-width: 0 2px 2px 0;
}

.toolbar .dock-head {
  padding-left: 10px;
}

.toolbar > .grip {
  margin: 6px 0 18px 50px;
}

.tools {
  display: grid;
  grid-template-columns: 60px 60px;
  padding-left: 10px;
}

.tools button {
  position: relative;
  height: 48px;
  border: 2px solid transparent;
  border-radius: 6px;
  background-clip: padding-box;
}

.tools svg {
  width: 56px;
  height: 44px;
  fill: #c6c6c6;
}

.tools .active {
  background-color: #2e2e2e;
}

.tools .fly::after {
  content: "";
  position: absolute;
  right: 2px;
  bottom: 2px;
  border-bottom: 7px solid #d8d8d8;
  border-left: 7px solid transparent;
}

.tools hr {
  grid-column: 1 / -1;
  height: 2px;
  margin: 4px 0;
  border: none;
  background: #4b4b4b;
}

.fill-stroke {
  width: 120px;
  height: 116px;
  margin: 0 0 8px 10px;
  font-family: "Noto Sans", sans-serif;
}

.segmented {
  display: flex;
  width: 118px;
  height: 42px;
  margin: 0 0 8px 10px;
  border: 2px solid #606060;
  border-radius: 6px;
}

.segmented button {
  display: flex;
  flex: 1;
  justify-content: center;
  align-items: center;
}

.segmented button + button {
  border-left: 2px solid #606060;
}

.swatch {
  width: 26px;
  height: 26px;
  border: 2px solid #383838;
}

.solid {
  background: #8a8a8a;
}

.none {
  background: linear-gradient(to bottom right, #8a8a8a 42%, #963c3c 42% 58%, #8a8a8a 58%);
}

.modes {
  height: 38px;
}

.modes circle {
  fill: none;
  stroke: #717171;
  stroke-width: 2;
}

.modes .front {
  fill: #535353;
}

.modes path {
  fill: #717171;
}

.screen-mode {
  display: block;
  margin: 16px 0 0 48px;
}

.screen-mode svg {
  fill: #5b5b5b;
  stroke: #717171;
  stroke-width: 2;
}

/* Panels */
.panels {
  display: flex;
  flex-direction: column;
  width: 480px;
  border-left: 2px solid #4b4b4b;
}

.panels .dock-head {
  justify-content: space-between;
  padding: 0 12px 0 48px;
  border-left: 2px solid #383838;
}

.panel-columns {
  display: flex;
  flex: 1;
}

.column {
  flex: 1;
  border: solid #383838;
  border-width: 0 0 2px 2px;
}

.icons-only {
  flex: none;
  width: 78px;
  margin-right: 2px;
  border-right-width: 2px;
}

.group {
  padding-bottom: 5px;
  border-bottom: 2px solid #383838;
  overflow: hidden;
}

.icons-only .grip {
  margin-left: 18px;
}

.group button {
  display: flex;
  align-items: center;
  width: 100%;
  height: 56px;
  color: #f0f0f0;
  font-size: 20px;
  font-weight: 700;
}

.group svg {
  width: 74px;
  height: 56px;
  fill: #c6c6c6;
}

/* Dock */
.dock {
  display: flex;
  height: 102px;
  margin: 2px 66px 0;
  padding: 0 5px 0 6px;
  background: linear-gradient(#cac6c9, #dad5d9);
  border-radius: 10px 10px 0 0;
}

.apps {
  display: flex;
  flex: 1;
}

.apps button {
  position: relative;
  flex: 1;
}

.dock svg {
  width: 84px;
  height: 102px;
  margin: 0 auto;
}

.running::after {
  content: "";
  position: absolute;
  left: 38px;
  bottom: 4px;
  width: 8px;
  height: 8px;
  border-radius: 50%;
  background: #555;
}

.divider {
  width: 2px;
  height: 74px;
  margin: 14px 16px 14px 20px;
  background: #a5a2a5;
}

.places {
  display: flex;
}

.places button {
  width: 85px;
}

.office {
  fill: #fff;
  font: 700 34px "Open Sans", sans-serif;
}

.office.small {
  font-size: 30px;
}

.badge {
  fill: #fff;
  font: 17px Inter, sans-serif;
}

.timecode {
  fill: #ff4048;
  font: 9px "Liberation Mono", monospace;
}

.fz {
  fill: #fff;
  font: italic 700 58px "Liberation Sans", sans-serif;
}

.ap {
  fill: #1b1b1b;
  font: 800 46px "Open Sans", sans-serif;
}

.adobe {
  font: 500 46px "Noto Sans", sans-serif;
}
```
